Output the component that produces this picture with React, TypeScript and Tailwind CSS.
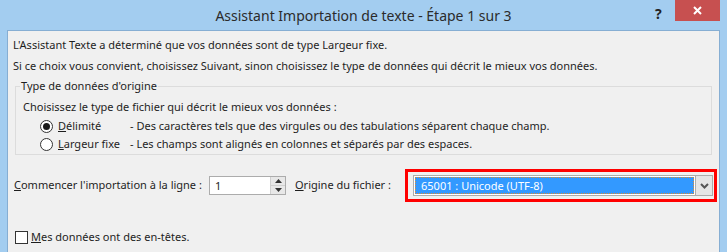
import React from "react"

function Radio({ checked }: { checked: boolean }) {
  return (
    <span className="w-[13px] h-[13px] rounded-full border border-[#333] bg-white flex items-center justify-center shrink-0">
      {checked && <span className="w-[7px] h-[7px] rounded-full bg-[#1a1a1a]" />}
    </span>
  )
}

export default function App() {
  return (
    <div
      className="w-[727px] h-[252px] bg-[#a3cdf0] flex flex-col text-[11px] text-[#1e1e1e] overflow-hidden"
      style={{ fontFamily: '"Noto Sans", "Open Sans", sans-serif' }}
    >
      {/* barre de titre */}
      <div className="h-[30px] relative flex items-center justify-center shrink-0">
        <span className="text-[14px] text-[#2b2b2b] mt-[1px]">Assistant Importation de texte - Étape 1 sur 3</span>
        <span className="absolute left-[655px] top-[3px] text-[14px] font-bold text-[#222]">?</span>
        <span className="absolute left-[675px] top-0 w-[45px] h-[21px] bg-[#c75050] flex items-center justify-center">
          <svg width="9" height="9" viewBox="0 0 9 9">
            <path d="M1 1 L8 8 M8 1 L1 8" stroke="white" strokeWidth="2" />
          </svg>
        </span>
      </div>

      {/* contenu */}
      <div className="ml-[7px] mr-[7px] flex-1 bg-[#f0f0f0] border-l border-t border-r border-[#86aed3] pl-[5px] pt-[6px]">
        <div className="leading-[16px]">L'Assistant Texte a déterminé que vos données sont de type Largeur fixe.</div>
        <div className="leading-[16px] mt-[5px]">Si ce choix vous convient, choisissez Suivant, sinon choisissez le type de données qui décrit le mieux vos données.</div>

        <div className="mt-[12px] ml-[2px] w-[697px] h-[69px] border border-[#dcdcdc] pl-[7px] relative">
          <span className="absolute left-[4px] top-[-9px] bg-[#f0f0f0] px-[1px] leading-[16px]">Type de données d'origine</span>
          <div className="leading-[16px] mt-[12px]">Choisissez le type de fichier qui décrit le mieux vos données :</div>
          <div className="flex items-center mt-[2px] ml-[17px] h-[18px]">
            <Radio checked />
            <span className="ml-[5px] w-[72px]"><u>D</u>élimité</span>
            <span>- Des caractères tels que des virgules ou des tabulations séparent chaque champ.</span>
          </div>
          <div className="flex items-center ml-[17px] h-[18px]">
            <Radio checked={false} />
            <span className="ml-[5px] w-[72px]"><u>L</u>argeur fixe</span>
            <span>- Les champs sont alignés en colonnes et séparés par des espaces.</span>
          </div>
        </div>

        <div className="flex items-center mt-[14px] h-[33px]">
          <span className="ml-[1px] w-[195px]"><u>C</u>ommencer l'importation à la ligne :</span>
          <div className="w-[77px] h-[19px] border border-[#acacac] bg-white flex">
            <span className="flex-1 pl-[5px] leading-[17px]">1</span>
            <div className="w-[15px] flex flex-col border-l border-[#d0d0d0]">
              <span className="flex-1 bg-[#e8e8e8] border-b border-[#d0d0d0] flex items-center justify-center">
                <svg width="7" height="4" viewBox="0 0 7 4"><path d="M0 4 L3.5 0 L7 4 Z" fill="#333" /></svg>
              </span>
              <span className="flex-1 bg-[#e8e8e8] flex items-center justify-center">
                <svg width="7" height="4" viewBox="0 0 7 4"><path d="M0 0 L3.5 4 L7 0 Z" fill="#333" /></svg>
              </span>
            </div>
          </div>
          <span className="ml-[9px] w-[110px]"><u>O</u>rigine du fichier :</span>
          <div className="w-[312px] h-[33px] border-[3px] border-[#ff0000] flex items-center pl-[5px]">
            <div className="w-[300px] h-[21px] border border-[#acacac] bg-white flex items-stretch">
              <div className="flex-1 m-[1px] bg-[#3399ff] text-white leading-[15px] pl-[5px] border border-dotted border-[#e08a30]">
                65001 : Unicode (UTF-8)
              </div>
              <div className="w-[17px] bg-[#e5e5e5] border-l border-[#acacac] flex items-center justify-center">
                <svg width="9" height="6" viewBox="0 0 9 6"><path d="M1 1 L4.5 4.5 L8 1" stroke="#555" strokeWidth="2" fill="none" /></svg>
              </div>
            </div>
          </div>
        </div>

        <div className="flex items-center mt-[27px] ml-[2px] h-[16px]">
          <span className="w-[13px] h-[13px] border border-[#333] bg-white shrink-0" />
          <span className="ml-[3px]"><u>M</u>es données ont des en-têtes.</span>
        </div>
      </div>
    </div>
  )
}
